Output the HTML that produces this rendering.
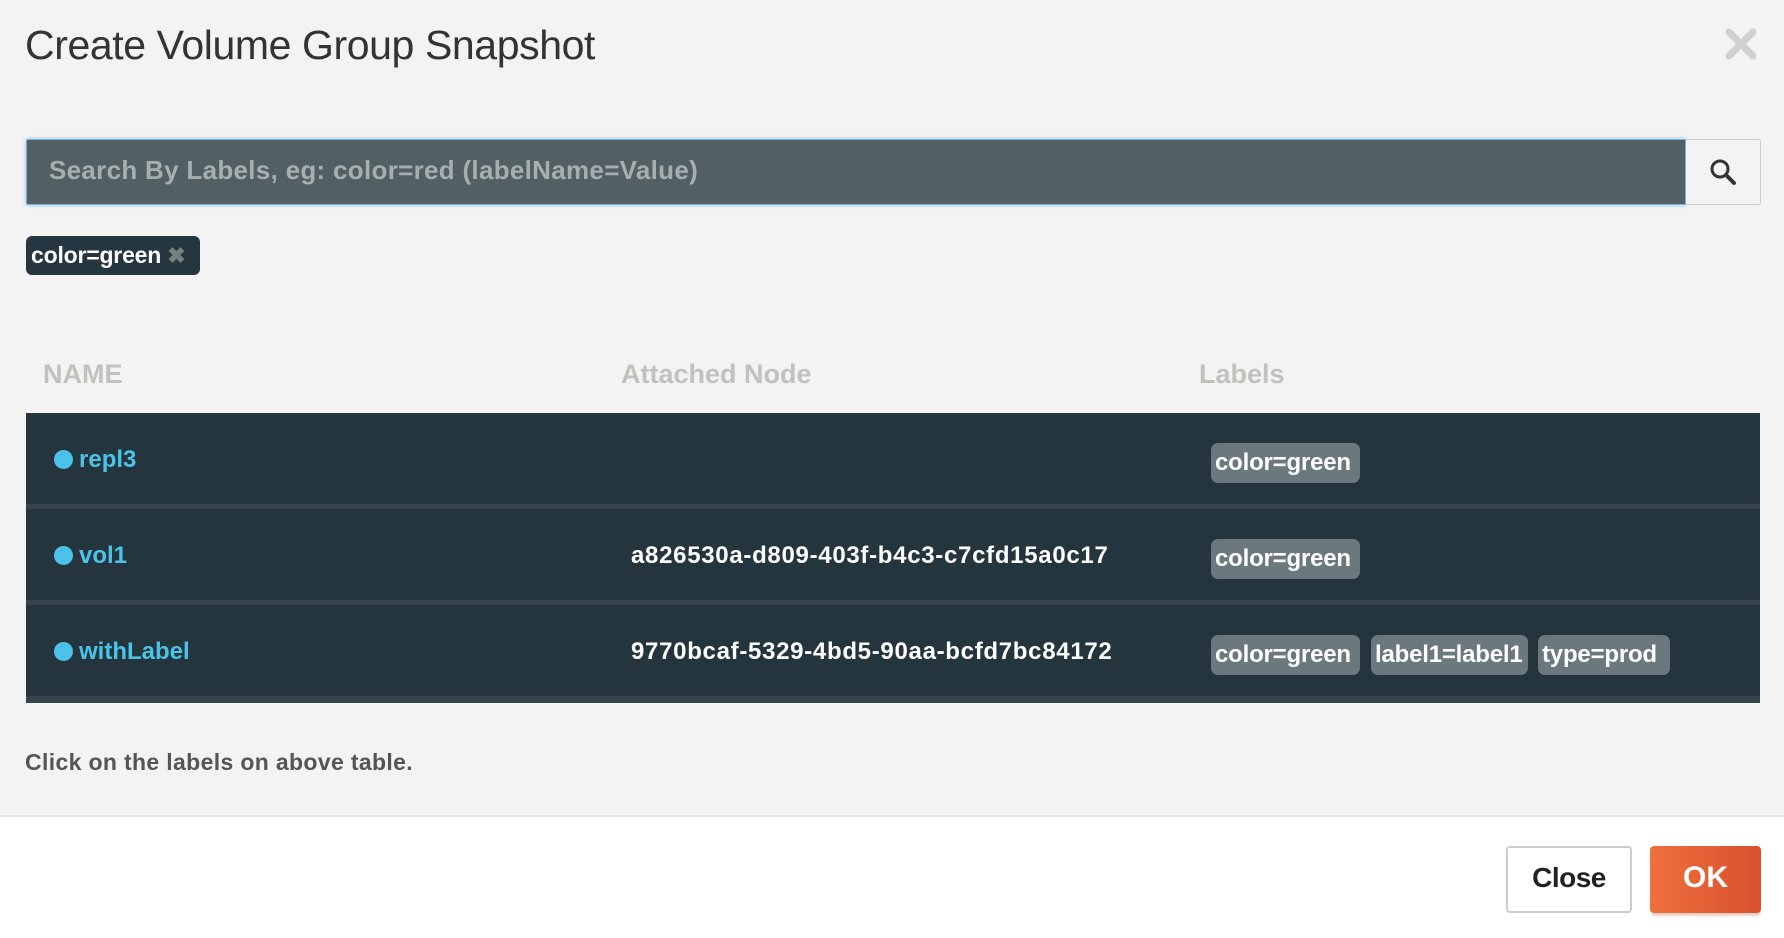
<!DOCTYPE html>
<html><head><meta charset="utf-8"><style>
*{margin:0;padding:0;box-sizing:border-box}
body{width:1784px;height:938px;background:#f3f3f3;font-family:"Liberation Sans",sans-serif;position:relative;overflow:hidden}
.a{position:absolute}
.title{left:25px;top:22px;font-size:41px;color:#333;font-weight:normal;letter-spacing:-0.4px}
.x{left:1724px;top:27px}
.search{left:26px;top:139px;width:1660px;height:66px;background:#525f63;border:1px solid #6fb3e8;box-shadow:0 0 4px #8cc4ee;border-radius:2px 0 0 2px}
.ph{left:49px;top:155px;font-size:26px;font-weight:bold;color:#a7aeb0;letter-spacing:0.3px}
.sbtn{left:1686px;top:139px;width:75px;height:66px;border:1px solid #ccc;border-left:none;background:#f3f3f3;border-radius:0 3px 3px 0}
.tag{left:26px;top:236px;width:174px;height:39px;background:#263640;border-radius:6px;color:#fff;font-weight:bold;font-size:23px;padding:6px 0 0 5px;letter-spacing:-0.2px}
.tag span{color:#77817f;font-size:22px}
.th{top:359px;font-size:27px;font-weight:bold;color:#c2c2bd;letter-spacing:0}
.table{left:26px;top:413px;width:1734px;height:290px;background:#37444c}
.row{position:absolute;left:0;width:1734px;height:91px;background:#25353d}
.dot{position:absolute;left:28px;width:19px;height:19px;border-radius:50%;background:#4bc3e8}
.nm{position:absolute;left:53px;font-size:24px;font-weight:bold;color:#4bc3e8;letter-spacing:0}
.nd{position:absolute;left:605px;font-size:24px;font-weight:bold;color:#fff;letter-spacing:0.7px}
.lb{position:absolute;height:40px;background:#6b787d;border-radius:7px;color:#fff;font-size:24px;font-weight:bold;padding:6px 0 0 4px;letter-spacing:-0.2px;white-space:nowrap}
.foot{left:25px;top:749px;font-size:23px;font-weight:bold;color:#555;letter-spacing:0.35px}
.bottom{left:0;top:815px;width:1784px;height:123px;background:#fff;border-top:2px solid #e4e4e4}
.close{left:1506px;top:846px;width:126px;height:67px;border:2px solid #ccc;border-radius:4px;background:#fff;font-size:28px;font-weight:bold;color:#222;text-align:center;line-height:60px;letter-spacing:-0.5px}
.ok{left:1650px;top:846px;width:111px;height:67px;border-radius:4px;background:linear-gradient(90deg,#ee6f3c,#d9512f);box-shadow:0 4px 2px -1px #e9d0c6;font-size:30px;font-weight:bold;color:#fff;text-align:center;line-height:64px}
</style></head><body>
<div class="a title">Create Volume Group Snapshot</div>
<svg class="a x" width="34" height="34" viewBox="0 0 34 34"><path d="M5 5L29 29M29 5L5 29" stroke="#d0d0d0" stroke-width="7" stroke-linecap="round"/></svg>
<div class="a search"></div>
<div class="a ph">Search By Labels, eg: color=red (labelName=Value)</div>
<div class="a sbtn"></div>
<svg class="a" style="left:1709px;top:158px" width="28" height="28" viewBox="0 0 28 28"><circle cx="11" cy="11" r="8" fill="none" stroke="#333" stroke-width="3"/><path d="M17 17L25 25" stroke="#333" stroke-width="4" stroke-linecap="round"/></svg>
<div class="a tag">color=green <span>✖</span></div>
<div class="a th" style="left:43px">NAME</div>
<div class="a th" style="left:621px">Attached Node</div>
<div class="a th" style="left:1199px">Labels</div>
<div class="a table">
 <div class="row" style="top:0">
  <div class="dot" style="top:37px"></div><div class="nm" style="top:33px">repl3</div>
  <div class="lb" style="left:1185px;top:30px;width:149px">color=green</div>
 </div>
 <div class="row" style="top:96px">
  <div class="dot" style="top:37px"></div><div class="nm" style="top:33px">vol1</div>
  <div class="nd" style="top:33px">a826530a-d809-403f-b4c3-c7cfd15a0c17</div>
  <div class="lb" style="left:1185px;top:30px;width:149px">color=green</div>
 </div>
 <div class="row" style="top:192px">
  <div class="dot" style="top:37px"></div><div class="nm" style="top:33px">withLabel</div>
  <div class="nd" style="top:33px">9770bcaf-5329-4bd5-90aa-bcfd7bc84172</div>
  <div class="lb" style="left:1185px;top:30px;width:149px">color=green</div>
  <div class="lb" style="left:1345px;top:30px;width:157px">label1=label1</div>
  <div class="lb" style="left:1512px;top:30px;width:132px">type=prod</div>
 </div>
</div>
<div class="a foot">Click on the labels on above table.</div>
<div class="a bottom"></div>
<div class="a close">Close</div>
<div class="a ok">OK</div>
</body></html>
